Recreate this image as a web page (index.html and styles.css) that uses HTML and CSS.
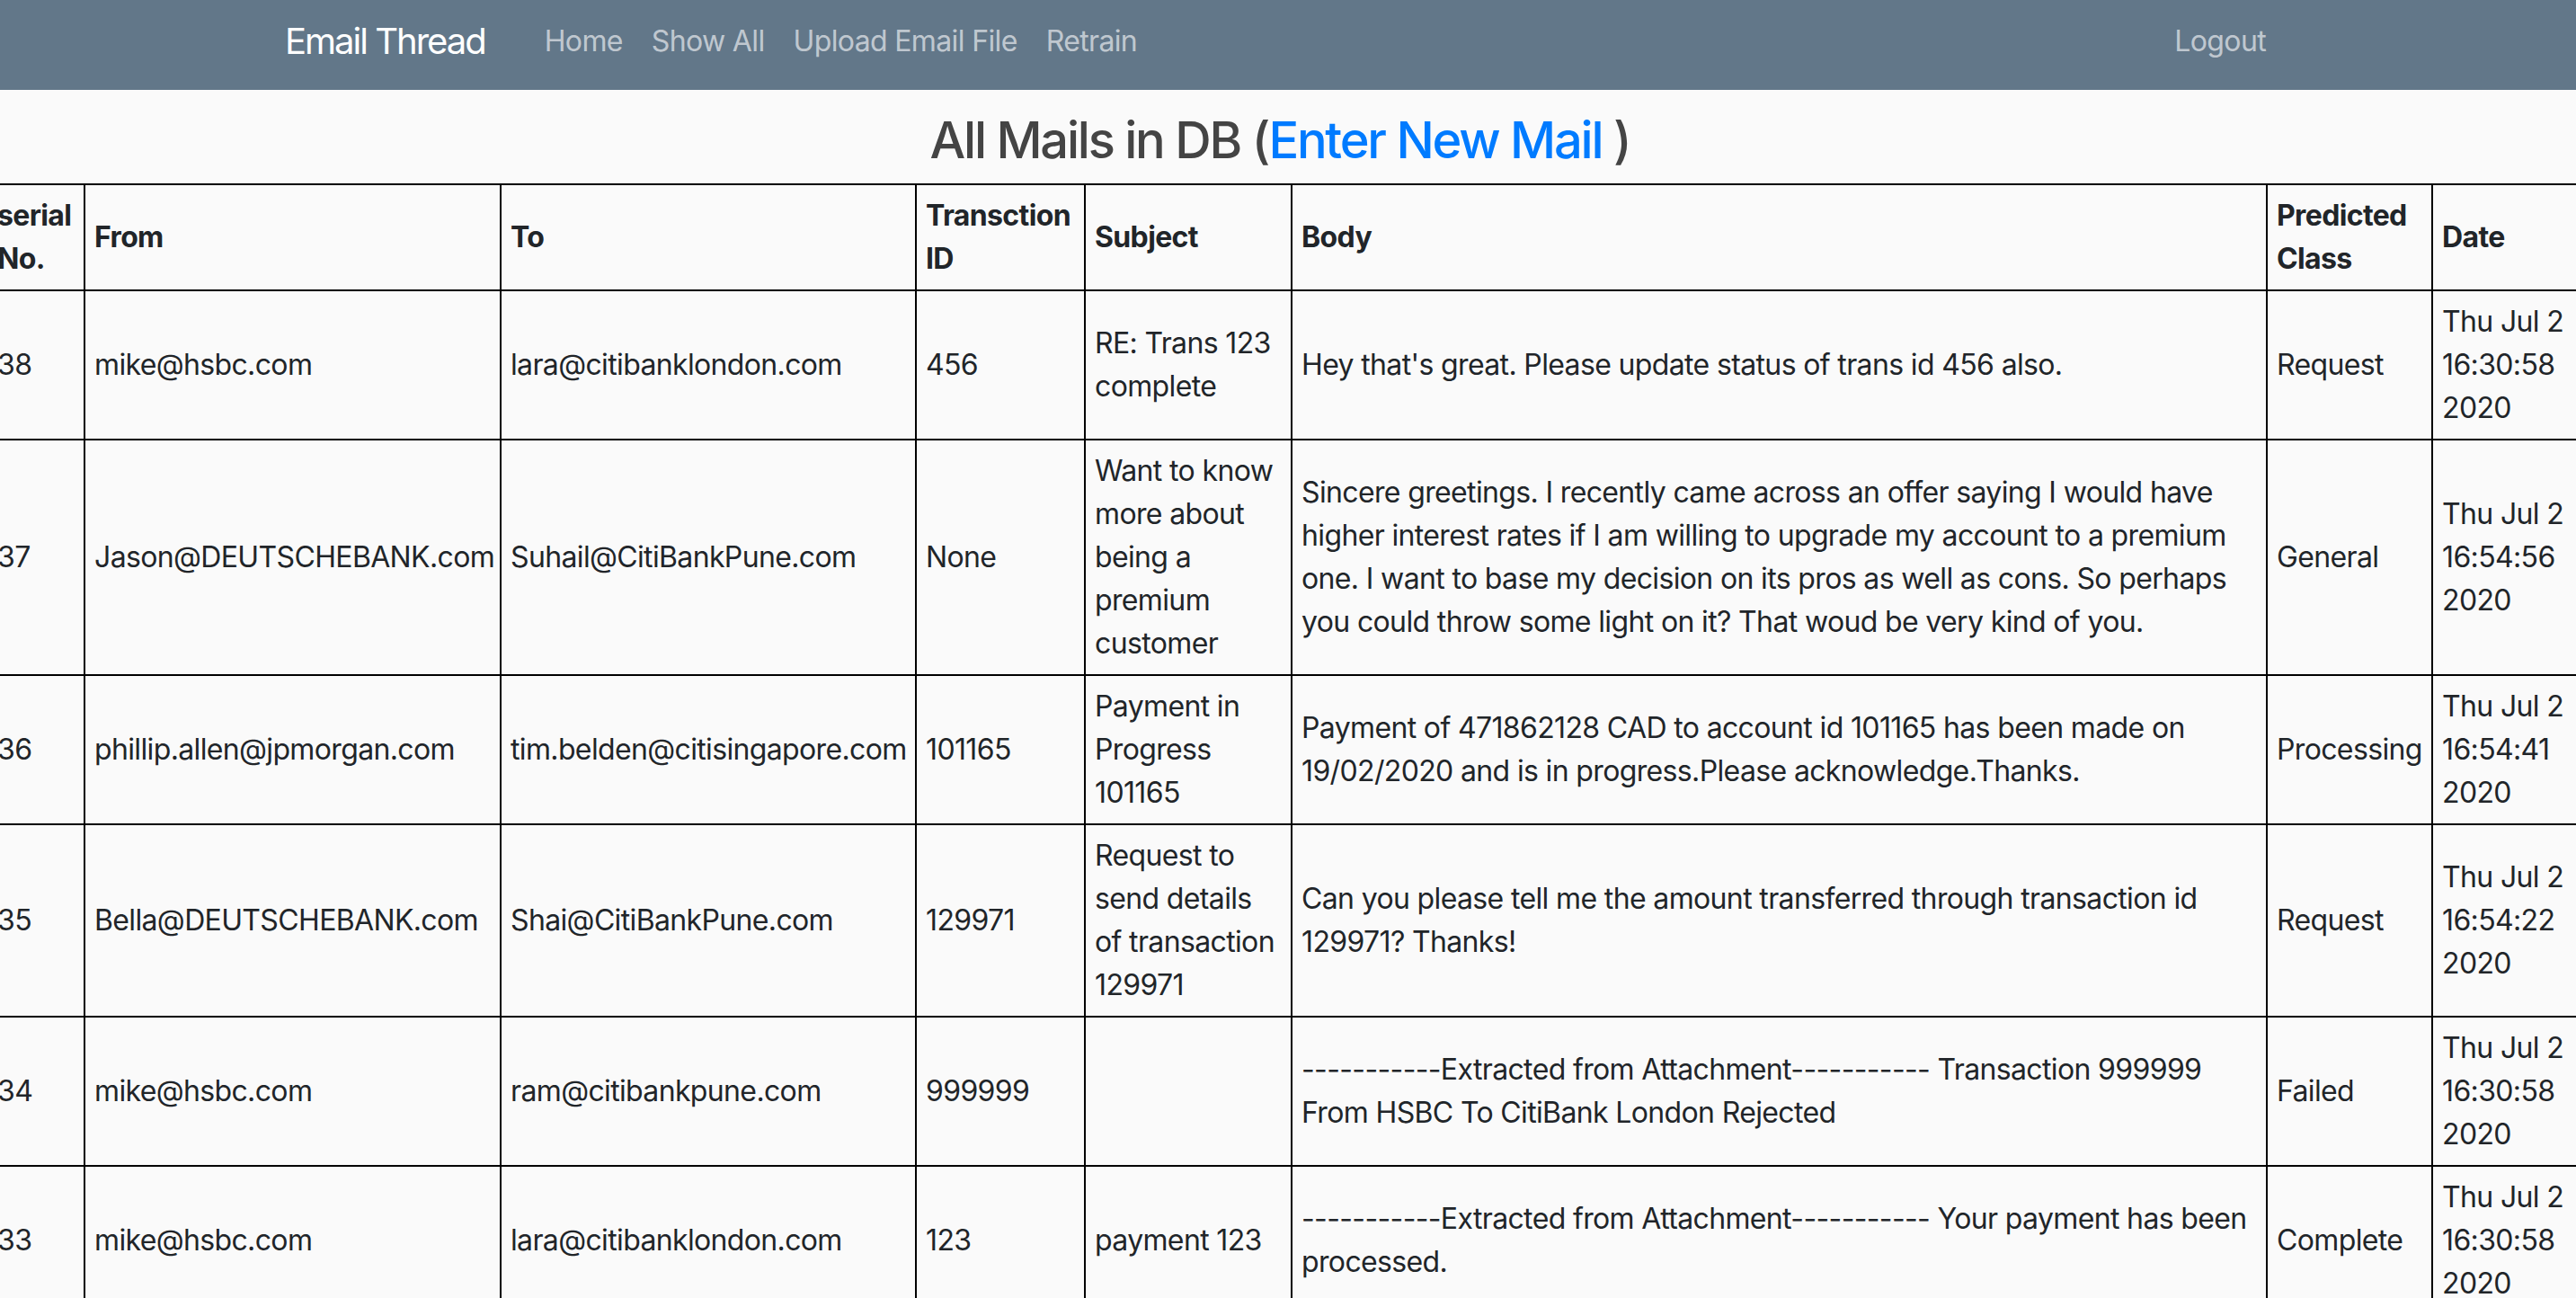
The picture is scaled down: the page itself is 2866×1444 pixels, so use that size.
FILE: index.html
```html
<!DOCTYPE html>
<html lang="en">
<head>
<meta charset="utf-8">
<title>Email Thread</title>
<link rel="stylesheet" href="styles.css">
</head>
<body>
<nav class="navbar">
  <a class="brand" href="#">Email Thread</a>
  <ul class="nav-links">
    <li><a class="nav-link" href="#">Home</a></li>
    <li><a class="nav-link" href="#">Show All</a></li>
    <li><a class="nav-link" href="#">Upload Email File</a></li>
    <li><a class="nav-link" href="#">Retrain</a></li>
  </ul>
  <a class="nav-link logout" href="#">Logout</a>
</nav>

<h3 class="page-title">All Mails in DB (<a href="#" class="title-link">Enter New Mail</a> )</h3>

<table class="mails">
  <colgroup>
    <col class="c-serial">
    <col class="c-from">
    <col class="c-to">
    <col class="c-tid">
    <col class="c-subject">
    <col class="c-body">
    <col class="c-class">
    <col class="c-date">
  </colgroup>
  <thead>
    <tr>
      <th>serial No.</th>
      <th>From</th>
      <th>To</th>
      <th>Transction ID</th>
      <th>Subject</th>
      <th>Body</th>
      <th>Predicted Class</th>
      <th>Date</th>
    </tr>
  </thead>
  <tbody>
    <tr>
      <td>38</td>
      <td>mike@hsbc.com</td>
      <td>lara@citibanklondon.com</td>
      <td>456</td>
      <td>RE: Trans 123 complete</td>
      <td>Hey that's great. Please update status of trans id 456 also.</td>
      <td>Request</td>
      <td>Thu Jul 2 16:30:58 2020</td>
    </tr>
    <tr>
      <td>37</td>
      <td>Jason@DEUTSCHEBANK.com</td>
      <td>Suhail@CitiBankPune.com</td>
      <td>None</td>
      <td>Want to know more about being a premium customer</td>
      <td>Sincere greetings. I recently came across an offer saying I would have higher interest rates if I am willing to upgrade my account to a premium one. I want to base my decision on its pros as well as cons. So perhaps you could throw some light on it? That woud be very kind of you.</td>
      <td>General</td>
      <td>Thu Jul 2 16:54:56 2020</td>
    </tr>
    <tr>
      <td>36</td>
      <td>phillip.allen@jpmorgan.com</td>
      <td>tim.belden@citisingapore.com</td>
      <td>101165</td>
      <td>Payment in Progress 101165</td>
      <td>Payment of 471862128 CAD to account id 101165 has been made on 19/02/2020 and is in progress.Please acknowledge.Thanks.</td>
      <td>Processing</td>
      <td>Thu Jul 2 16:54:41 2020</td>
    </tr>
    <tr>
      <td>35</td>
      <td>Bella@DEUTSCHEBANK.com</td>
      <td>Shai@CitiBankPune.com</td>
      <td>129971</td>
      <td>Request to send details of transaction 129971</td>
      <td>Can you please tell me the amount transferred through transaction id 129971? Thanks!</td>
      <td>Request</td>
      <td>Thu Jul 2 16:54:22 2020</td>
    </tr>
    <tr>
      <td>34</td>
      <td>mike@hsbc.com</td>
      <td>ram@citibankpune.com</td>
      <td>999999</td>
      <td></td>
      <td>-----------Extracted from Attachment----------- Transaction 999999 From HSBC To CitiBank London Rejected</td>
      <td>Failed</td>
      <td>Thu Jul 2 16:30:58 2020</td>
    </tr>
    <tr>
      <td>33</td>
      <td>mike@hsbc.com</td>
      <td>lara@citibanklondon.com</td>
      <td>123</td>
      <td>payment 123</td>
      <td>-----------Extracted from Attachment----------- Your payment has been processed.</td>
      <td>Complete</td>
      <td>Thu Jul 2 16:30:58 2020</td>
    </tr>
  </tbody>
</table>
</body>
</html>
```
FILE: styles.css
```css
html, body {
  overflow: hidden;
}

body {
  margin: 0;
  background: #fafafa;
  color: #212529;
  font-family: Inter, "Liberation Sans", sans-serif;
  font-size: 32px;
  line-height: 1.5;
  letter-spacing: -0.02em;
}

a {
  text-decoration: none;
}

.navbar {
  display: flex;
  align-items: center;
  box-sizing: border-box;
  height: 100px;
  padding: 0 329px 9px 317px;
  background: #627789;
}

.brand {
  color: #ffffff;
  font-size: 40px;
  line-height: 60px;
  letter-spacing: -0.05em;
  margin-right: 50px;
}

.nav-links {
  display: flex;
  list-style: none;
  margin: 0;
  padding: 0;
}

.nav-link {
  display: block;
  padding: 0 16px;
  line-height: 48px;
  color: rgba(255, 255, 255, 0.62);
}

.logout {
  margin-left: auto;
}

.page-title {
  margin: 23px 0 14px;
  padding-right: 18px;
  text-align: center;
  font-size: 56px;
  font-weight: 500;
  line-height: 1.2;
  letter-spacing: -0.04em;
  color: #444444;
}

.title-link {
  color: #007bff;
}

.mails {
  table-layout: fixed;
  border-collapse: collapse;
  width: 2890px;
  margin-left: -15px;
}

.mails th,
.mails td {
  border: 2px solid #000000;
  padding: 10px;
  text-align: left;
  vertical-align: middle;
}

.mails th {
  font-weight: 700;
}

.c-serial { width: 108px; }
.c-from { width: 463px; }
.c-to { width: 462px; }
.c-tid { width: 188px; }
.c-subject { width: 230px; }
.c-body { width: 1085px; }
.c-class { width: 184px; }
.c-date { width: 170px; }
```
